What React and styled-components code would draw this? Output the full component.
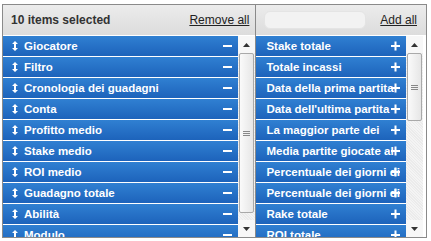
import React from 'react';
import styled, { createGlobalStyle } from 'styled-components';

const GlobalStyle = createGlobalStyle`
  body {
    margin: 0;
    background: #ffffff;
    font-family: "Liberation Sans", Arial, sans-serif;
  }
`;

const Page = styled.div`
  padding: 4px 0 0 2px;
  width: 431px;
  height: 241px;
  box-sizing: border-box;
  overflow: hidden;
`;

const Widget = styled.div`
  display: flex;
  width: 425px;
  height: 234px;
  border: 1px solid #8a8a8a;
  box-sizing: border-box;
  overflow: hidden;
`;

const Panel = styled.div`
  display: flex;
  flex-direction: column;
  width: ${(p) => p.$width}px;
  border-right: ${(p) => (p.$divider ? '1px solid #8a8a8a' : 'none')};
`;

const Header = styled.div`
  display: flex;
  align-items: center;
  justify-content: space-between;
  height: 30px;
  padding: 0 ${(p) => p.$padRight || 6}px 0 8px;
  background: linear-gradient(#ececec, #dcdcdc);
  border-bottom: 1px solid #ffffff;
  font-size: 12px;
  color: #333;
`;

const Count = styled.span`
  font-weight: bold;
`;

const HeaderLink = styled.a`
  color: #222;
  text-decoration: underline;
  cursor: pointer;
`;

const Search = styled.div`
  width: 100px;
  height: 16px;
  background: #f2f2f2;
  border: 1px solid #e4e4e4;
  border-radius: 6px;
`;

const ListArea = styled.div`
  display: flex;
  flex: 1;
  padding-right: ${(p) => p.$padRight || 0}px;
  overflow: hidden;
`;

const List = styled.div`
  flex: 1;
  display: flex;
  flex-direction: column;
  gap: 1px;
  overflow: hidden;
  background: #ffffff;
`;

const Row = styled.div`
  position: relative;
  display: flex;
  align-items: center;
  gap: 6px;
  flex-shrink: 0;
  height: 20px;
  padding-left: ${(p) => p.$pad}px;
  background: linear-gradient(#3080d2, #1d63bb);
  color: #fff;
  font-size: 11.5px;
  font-weight: bold;
  white-space: nowrap;
  overflow: hidden;
`;

const Action = styled.span`
  position: absolute;
  right: 6px;
  top: 5px;
  width: 10px;
  height: 10px;
  display: flex;
  align-items: center;
  justify-content: center;
`;

const Scrollbar = styled.div`
  display: flex;
  flex-direction: column;
  width: 17px;
  background: repeating-linear-gradient(45deg, #f4f4f4 0 1px, #ebebeb 1px 2px);
`;

const Arrow = styled.div`
  display: flex;
  align-items: center;
  justify-content: center;
  height: 17px;
  flex-shrink: 0;
  background: #f7f7f7;
`;

const Thumb = styled.div`
  display: flex;
  align-items: center;
  justify-content: center;
  height: ${(p) => p.$h}px;
  margin: 0 1px;
  flex-shrink: 0;
  border: 1px solid #a9a9a9;
  border-radius: 2px;
  background: linear-gradient(90deg, #fafafa, #e6e6e6);
  box-sizing: border-box;
`;

const Spacer = styled.div`
  flex: 1;
`;

const Grip = () => (
  <svg width="7" height="7" viewBox="0 0 7 7">
    <path d="M0 1.5h7M0 3.5h7M0 5.5h7" stroke="#888" strokeWidth="1" />
  </svg>
);

const Drag = () => (
  <svg width="6" height="10" viewBox="0 0 6 10">
    <path d="M3 0L6 3H4V7H6L3 10L0 7H2V3H0Z" fill="#fff" />
  </svg>
);

const Minus = () => (
  <svg width="9" height="10" viewBox="0 0 9 10">
    <rect x="0" y="4" width="9" height="2" fill="#fff" />
  </svg>
);

const Plus = () => (
  <svg width="9" height="10" viewBox="0 0 9 10">
    <rect x="0" y="4" width="9" height="2" fill="#fff" />
    <rect x="3.5" y="0.5" width="2" height="9" fill="#fff" />
  </svg>
);

const Tri = ({ up }) => (
  <svg width="7" height="4" viewBox="0 0 7 4">
    <path d={up ? 'M0 4L3.5 0L7 4Z' : 'M0 0L3.5 4L7 0Z'} fill="#333" />
  </svg>
);

function Scroll({ thumb }) {
  return (
    <Scrollbar>
      <Arrow>
        <Tri up />
      </Arrow>
      <Thumb $h={thumb}>
        <Grip />
      </Thumb>
      <Spacer />
      <Arrow>
        <Tri />
      </Arrow>
    </Scrollbar>
  );
}

const selected = [
  'Giocatore',
  'Filtro',
  'Cronologia dei guadagni',
  'Conta',
  'Profitto medio',
  'Stake medio',
  'ROI medio',
  'Guadagno totale',
  'Abilità',
  'Modulo',
];

const available = [
  'Stake totale',
  'Totale incassi',
  'Data della prima partita',
  "Data dell'ultima partita",
  'La maggior parte dei',
  'Media partite giocate al',
  'Percentuale dei giorni di',
  'Percentuale dei giorni di',
  'Rake totale',
  'ROI totale',
];

export default function App() {
  return (
    <>
      <GlobalStyle />
      <Page>
        <Widget>
          <Panel $width={253} $divider>
            <Header>
              <Count>10 items selected</Count>
              <HeaderLink>Remove all</HeaderLink>
            </Header>
            <ListArea>
              <List>
                {selected.map((name) => (
                  <Row key={name} $pad={9}>
                    <Drag />
                    {name}
                    <Action>
                      <Minus />
                    </Action>
                  </Row>
                ))}
              </List>
              <Scroll thumb={160} />
            </ListArea>
          </Panel>
          <Panel $width={170}>
            <Header $padRight={9}>
              <Search />
              <HeaderLink>Add all</HeaderLink>
            </Header>
            <ListArea $padRight={3}>
              <List>
                {available.map((name, i) => (
                  <Row key={i} $pad={10}>
                    {name}
                    <Action>
                      <Plus />
                    </Action>
                  </Row>
                ))}
              </List>
              <Scroll thumb={68} />
            </ListArea>
          </Panel>
        </Widget>
      </Page>
    </>
  );
}
